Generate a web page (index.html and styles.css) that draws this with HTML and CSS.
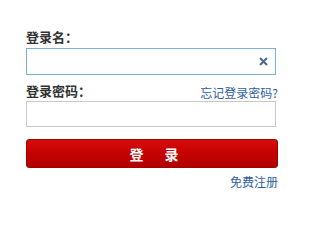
FILE: index.html
```html
<!DOCTYPE html>
<html lang="zh-CN">
<head>
<meta charset="utf-8">
<link rel="stylesheet" href="styles.css">
</head>
<body>
<form class="login">
  <div class="label-row"><label class="label">登录名：</label></div>
  <div class="field">
    <input class="input input-focus" type="text">
    <span class="clear">
      <svg width="9" height="9" viewBox="0 0 9 9"><path d="M1 1 L8 8 M8 1 L1 8" stroke="#4a6a8c" stroke-width="2" fill="none"/></svg>
    </span>
  </div>
  <div class="label-row row2">
    <label class="label">登录密码：</label>
    <a class="link forgot" href="#">忘记登录密码?</a>
  </div>
  <div class="field">
    <input class="input input-pw" type="password">
  </div>
  <button class="submit" type="button"><span>登</span><span>录</span></button>
  <div class="register"><a class="link" href="#">免费注册</a></div>
</form>
</body>
</html>
```
FILE: styles.css
```css
html, body {
  margin: 0;
  padding: 0;
  background: #fff;
}
body {
  font-family: "Noto Sans CJK SC", "Noto Sans", sans-serif;
  font-size: 12px;
  color: #333;
}
.login {
  width: 252px;
  padding: 29px 0 0 26px;
  display: flex;
  flex-direction: column;
}
.label-row {
  height: 16px;
  line-height: 16px;
  display: flex;
  justify-content: space-between;
  align-items: flex-end;
}
.row2 {
  margin-top: 8px;
}
.label {
  font-size: 13px;
  font-weight: bold;
  color: #333;
}
.link {
  color: #2f5e9e;
  text-decoration: none;
  font-size: 12px;
}
.forgot {
  line-height: 16px;
  position: relative;
  top: 2px;
}
.field {
  position: relative;
  width: 250px;
}
.field:first-of-type {
  margin-top: 3px;
}
.input {
  display: block;
  box-sizing: border-box;
  width: 250px;
  margin: 0;
  padding: 0 4px;
  background: #fff;
  outline: none;
}
.input-focus {
  height: 27px;
  margin-top: 3px;
  border: 1px solid #7ab0d2;
  box-shadow: inset 0 0 1px #b9d7ea;
}
.input-pw {
  height: 26px;
  margin-top: 2px;
  border: 1px solid #c9c9c9;
}
.clear {
  position: absolute;
  right: 8px;
  top: 12px;
  width: 9px;
  height: 9px;
  display: block;
}
.clear svg {
  display: block;
}
.submit {
  margin: 12px 0 0;
  width: 252px;
  height: 29px;
  box-sizing: border-box;
  border: 1px solid #a30000;
  border-radius: 3px;
  background: linear-gradient(#d60b0b, #c40202 50%, #b00000);
  color: #fff;
  font-family: "Noto Sans CJK SC", sans-serif;
  font-size: 14px;
  font-weight: bold;
  display: flex;
  justify-content: center;
  align-items: center;
  gap: 21px;
  padding: 0 0 0 4px;
  cursor: pointer;
}
.register {
  margin-top: 6px;
  line-height: 16px;
  text-align: right;
}
```
